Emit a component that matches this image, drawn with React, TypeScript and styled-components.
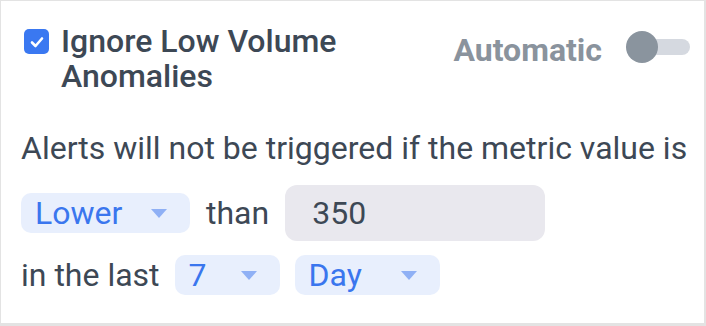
import styled, { createGlobalStyle } from "styled-components";

const GlobalStyle = createGlobalStyle`
  html, body {
    margin: 0;
    padding: 0;
    background: #fff;
  }
  * {
    box-sizing: border-box;
  }
`

const Card = styled.div`
  width: 706px;
  height: 326px;
  border-style: solid;
  border-color: #e3e3e3;
  border-width: 1px 2px 3px 1px;
  background: #fff;
  padding: 28px 14px 0 20px;
  font-family: Roboto, "Liberation Sans", sans-serif;
  font-size: 32px;
  color: #3d4855;
`

const Header = styled.div`
  display: flex;
  justify-content: space-between;
  align-items: flex-start;
`

const CheckLabel = styled.label`
  display: flex;
  align-items: flex-start;
  gap: 12px;
  padding-left: 3px;
`

const Box = styled.span`
  width: 25px;
  height: 25px;
  border-radius: 5px;
  background: #3a78f1;
  display: flex;
  align-items: center;
  justify-content: center;
  flex-shrink: 0;
`

const Title = styled.span`
  font-weight: 500;
  line-height: 35px;
  margin-top: -5px;
  width: 300px;
`

const AutoGroup = styled.div`
  display: flex;
  align-items: flex-start;
  gap: 24px;
  margin-top: 2px;
`

const AutoLabel = styled.span`
  font-weight: 700;
  color: #8a939d;
  line-height: 37px;
  margin-top: 1px;
`

const Toggle = styled.span`
  position: relative;
  width: 64px;
  height: 32px;
  display: flex;
  align-items: center;

  &::before {
    content: "";
    width: 63px;
    height: 16px;
    margin-left: 1px;
    border-radius: 8px;
    background: #d5d9e0;
  }

  &::after {
    content: "";
    position: absolute;
    left: 0;
    top: 0;
    width: 32px;
    height: 32px;
    border-radius: 50%;
    background: #8a949e;
  }
`

const Description = styled.p`
  margin: 36px 0 0;
  line-height: 36px;
`

const Row = styled.div<{ $top: number; $gap: number }>`
  display: flex;
  align-items: center;
  gap: ${p => p.$gap}px;
  margin-top: ${p => p.$top}px;
`

const Select = styled.div<{ $width: number }>`
  width: ${p => p.$width}px;
  height: 40px;
  border-radius: 10px;
  background: #e8effd;
  color: #3a76ee;
  display: flex;
  align-items: center;
  justify-content: space-between;
  padding: 0 23px 0 14px;
`

const Caret = styled.span`
  width: 0;
  height: 0;
  border-left: 8px solid transparent;
  border-right: 8px solid transparent;
  border-top: 9px solid #8fb0f5;
`

const NumberInput = styled.div`
  width: 260px;
  height: 56px;
  border-radius: 12px;
  background: #e9e8ee;
  display: flex;
  align-items: center;
  padding-left: 27px;
`

const Dropdown = ({ value, width }: { value: string; width: number }) => (
    <Select $width={width}>
        <span>{value}</span>
        <Caret/>
    </Select>
)

export default function App() {
    return (
        <>
            <GlobalStyle/>
            <Card>
                <Header>
                    <CheckLabel>
                        <Box>
                            <svg width="16" height="16" viewBox="0 0 16 16">
                                <path d="M3 8.5 L6.5 12 L13 4.5" fill="none" stroke="#fff" strokeWidth="2.6"
                                      strokeLinecap="round" strokeLinejoin="round"/>
                            </svg>
                        </Box>
                        <Title>Ignore Low Volume Anomalies</Title>
                    </CheckLabel>
                    <AutoGroup>
                        <AutoLabel>Automatic</AutoLabel>
                        <Toggle/>
                    </AutoGroup>
                </Header>
                <Description>Alerts will not be triggered if the metric value is</Description>
                <Row $top={19} $gap={16}>
                    <Dropdown value="Lower" width={169}/>
                    <span>than</span>
                    <NumberInput>350</NumberInput>
                </Row>
                <Row $top={14} $gap={15}>
                    <span>in the last</span>
                    <Dropdown value="7" width={105}/>
                    <Dropdown value="Day" width={145}/>
                </Row>
            </Card>
        </>
    )
}
